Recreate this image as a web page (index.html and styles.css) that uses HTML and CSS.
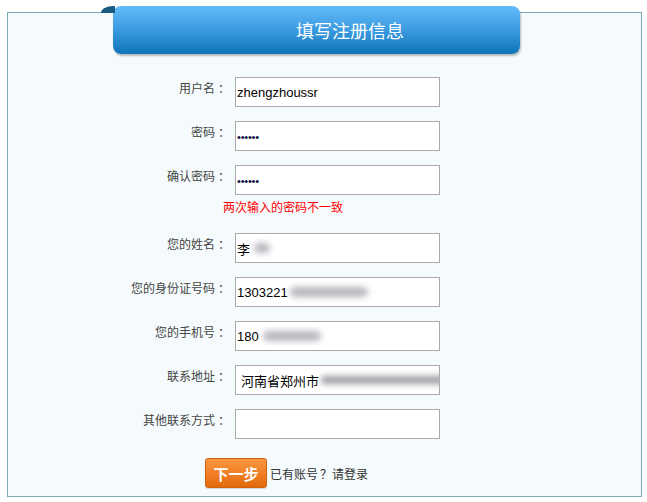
FILE: index.html
```html
<!DOCTYPE html>
<html lang="zh-CN">
<head>
<meta charset="utf-8">
<title>填写注册信息</title>
<link rel="stylesheet" href="styles.css">
</head>
<body>
<div class="box">
  <div class="ribbon"><h1 class="ribbon-title">填写注册信息</h1></div>
  <form class="form">
    <div class="row">
      <label class="label">用户名<span class="colon">：</span></label>
      <div class="field"><span class="val">zhengzhoussr</span></div>
    </div>
    <div class="row">
      <label class="label">密码<span class="colon">：</span></label>
      <div class="field"><span class="dots">••••••</span></div>
    </div>
    <div class="row">
      <label class="label">确认密码<span class="colon">：</span></label>
      <div class="field"><span class="dots">••••••</span></div>
    </div>
    <div class="error">两次输入的密码不一致</div>
    <div class="row">
      <label class="label">您的姓名<span class="colon">：</span></label>
      <div class="field"><span class="val cjk">李</span><span class="blur blur-name"></span></div>
    </div>
    <div class="row">
      <label class="label">您的身份证号码<span class="colon">：</span></label>
      <div class="field"><span class="val">1303221</span><span class="blur blur-id"></span></div>
    </div>
    <div class="row">
      <label class="label">您的手机号<span class="colon">：</span></label>
      <div class="field"><span class="val">180</span><span class="blur blur-phone"></span></div>
    </div>
    <div class="row">
      <label class="label">联系地址<span class="colon">：</span></label>
      <div class="field field-addr"><span class="val cjk">河南省郑州市</span><span class="blur blur-addr"></span></div>
    </div>
    <div class="row">
      <label class="label">其他联系方式<span class="colon">：</span></label>
      <div class="field"></div>
    </div>
    <div class="actions">
      <button type="button" class="btn">下一步</button>
      <a class="login">已有账号<span class="qmark">？</span>请登录</a>
    </div>
  </form>
</div>
</body>
</html>
```
FILE: styles.css
```css
html, body {
  margin: 0;
  padding: 0;
  background: #ffffff;
}
body {
  font-family: "Noto Sans CJK SC", "Liberation Sans", sans-serif;
}
.box {
  margin: 12px 0 0 7px;
  width: 633px;
  height: 483px;
  border: 1px solid #7eaabb;
  background: #f5fbfc;
  display: flex;
  flex-direction: column;
}
.ribbon {
  position: relative;
  margin: -7px 0 0 105px;
  width: 407px;
  height: 48px;
  border-radius: 8px;
  background: linear-gradient(to bottom, #63bbfa 0%, #3a9ae0 50%, #0d74ba 100%);
  box-shadow: 1px 2px 2px rgba(0, 0, 0, 0.25);
  display: flex;
  align-items: center;
}
.ribbon::before {
  content: "";
  position: absolute;
  left: -12px;
  top: 0;
  width: 14px;
  height: 7px;
  border-radius: 12px 0 0 0 / 7px 0 0 0;
  background: #1b5a80;
}
.ribbon-title {
  margin: 0 0 0 183px;
  font-size: 18px;
  font-weight: normal;
  color: #ffffff;
  line-height: 24px;
  letter-spacing: 0;
}
.form {
  margin-top: 23px;
  display: flex;
  flex-direction: column;
}
.row {
  display: flex;
  align-items: flex-start;
  margin-bottom: 14px;
}
.label {
  width: 219px;
  text-align: right;
  font-size: 12px;
  line-height: 16px;
  padding-top: 3px;
  color: #444;
}
.colon {
  display: inline-block;
  margin-left: 3px;
  margin-right: -3px;
}
.field {
  margin-left: 8px;
  width: 202px;
  height: 28px;
  border: 1px solid #aaaaaa;
  background: #ffffff;
  display: flex;
  align-items: center;
  padding-left: 1px;
  overflow: hidden;
}
.field-addr {
  padding-left: 5px;
  width: 198px;
}
.val {
  font-family: "Liberation Sans", Arial, sans-serif;
  font-size: 13px;
  color: #000;
  white-space: nowrap;
}
.val.cjk {
  font-family: "Noto Sans CJK SC", sans-serif;
  font-size: 13px;
}
.dots {
  font-family: "Liberation Sans", Arial, sans-serif;
  font-size: 11px;
  color: #0a0a3a;
  letter-spacing: -0.2px;
  padding-top: 1px;
}
.blur {
  display: block;
  height: 10px;
  background: #b9b5bd;
  filter: blur(3px);
  border-radius: 5px;
  flex: none;
}
.blur-name { width: 16px; margin-left: 4px; }
.blur-id { width: 78px; margin-left: 2px; }
.blur-phone { width: 58px; margin-left: 4px; }
.blur-addr { width: 130px; margin-left: 2px; height: 8px; background: #9d9aa2; }
.error {
  margin: -10px 0 18px 215px;
  font-size: 12px;
  line-height: 16px;
  color: #ff0000;
}
.actions {
  margin-top: 5px;
  padding-left: 197px;
  display: flex;
  align-items: center;
}
.btn {
  width: 62px;
  height: 30px;
  border: 1px solid #d0620b;
  border-radius: 3px;
  background: linear-gradient(to bottom, #f7963f 0%, #f28026 50%, #e2680c 100%);
  color: #ffffff;
  font-family: "Noto Sans CJK SC", sans-serif;
  font-size: 15px;
  font-weight: bold;
  padding: 0;
  box-shadow: 0 1px 1px rgba(0, 0, 0, 0.15);
}
.login {
  margin-left: 3px;
  font-size: 12px;
  color: #333;
  text-decoration: none;
}
.qmark {
  margin-left: 2px;
}
```
